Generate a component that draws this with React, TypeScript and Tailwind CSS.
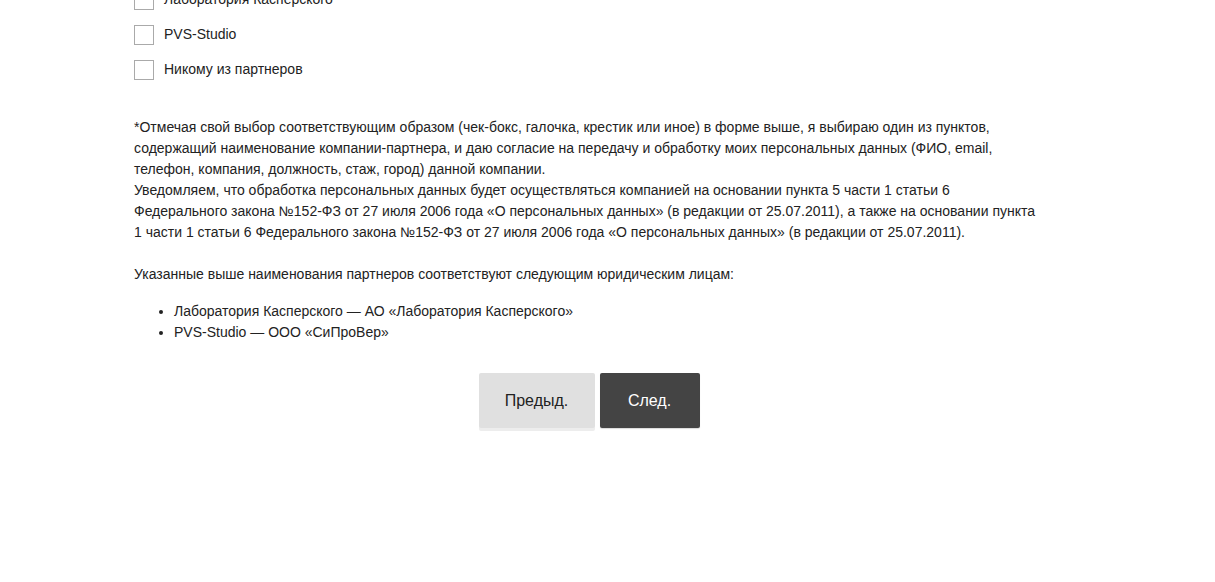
import { FC } from "react";

const partners = ["Лаборатория Касперского", "PVS-Studio", "Никому из партнеров"];

const legal = [
  "Лаборатория Касперского — АО «Лаборатория Касперского»",
  "PVS-Studio — ООО «СиПроВер»",
];

const App: FC = () => {
  return (
    <div className="min-h-[582px] bg-white font-['Liberation_Sans',Arial,sans-serif] text-[14px] text-[#222]">
      <div className="ml-[134px] w-[910px] -mt-[10px]">
        <div className="flex flex-col gap-[15px]">
          {partners.map((p) => (
            <label key={p} className="flex h-[20px] items-center gap-[10px]">
              <span className="block h-[20px] w-[20px] shrink-0 border border-[#aaa] bg-white" />
              <span className="pb-[2px] leading-[18px]">{p}</span>
            </label>
          ))}
        </div>

        <p className="mt-[37px] leading-[21px]">
          *Отмечая свой выбор соответствующим образом (чек-бокс, галочка, крестик или иное) в форме выше, я выбираю один из пунктов, содержащий наименование компании-партнера, и даю согласие на передачу и обработку моих персональных данных (ФИО, email, телефон, компания, должность, стаж, город) данной компании.
          <br />
          Уведомляем, что обработка персональных данных будет осуществляться компанией на основании пункта 5 части 1 статьи 6 Федерального закона №152-ФЗ от 27 июля 2006 года «О персональных данных» (в редакции от 25.07.2011), а также на основании пункта 1 части 1 статьи 6 Федерального закона №152-ФЗ от 27 июля 2006 года «О персональных данных» (в редакции от 25.07.2011).
        </p>

        <p className="mt-[21px] leading-[21px]">
          Указанные выше наименования партнеров соответствуют следующим юридическим лицам:
        </p>

        <ul className="mt-[16px] list-disc pl-[40px] leading-[21px]">
          {legal.map((l) => (
            <li key={l}>{l}</li>
          ))}
        </ul>

        <div className="mt-[30px] flex justify-center gap-[5px]">
          <button
            type="button"
            className="h-[55px] w-[116px] rounded-[2px] bg-[#e0e0e0] text-[16px] text-[#222] shadow-[0_3px_0_#ededed]"
          >
            Предыд.
          </button>
          <button
            type="button"
            className="h-[55px] w-[100px] rounded-[2px] bg-[#444] text-[16px] text-white shadow-[0_1px_1px_rgba(0,0,0,0.15)]"
          >
            След.
          </button>
        </div>
      </div>
    </div>
  );
};

export default App;
